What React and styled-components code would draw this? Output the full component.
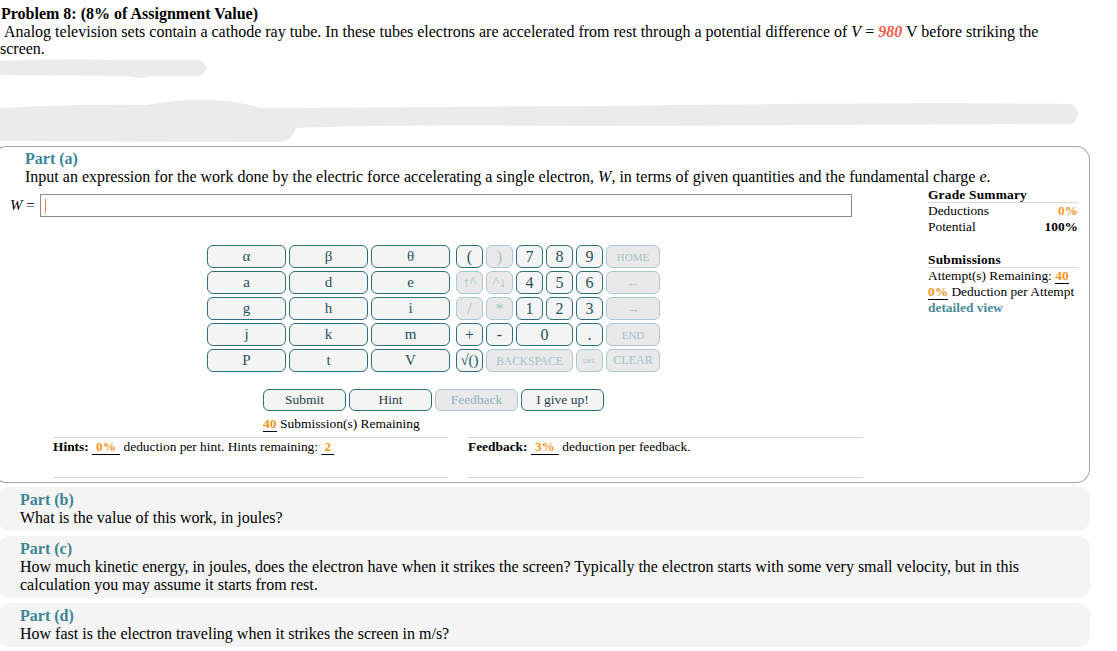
import React from 'react';
import styled, { createGlobalStyle } from 'styled-components';

const TEAL = '#2f6f7e';
const HEAD = '#3b8595';
const ORANGE = '#f7941d';

const GlobalStyle = createGlobalStyle`
  html, body { margin: 0; padding: 0; background: #fff; }
  body {
    font-family: "Liberation Serif", "Times New Roman", serif;
    color: #000;
    overflow: hidden;
    width: 1117px;
    height: 651px;
  }
`;

const Page = styled.div`
  padding-top: 5px;
`;

const Title = styled.div`
  font-size: 16px;
  font-weight: bold;
  line-height: 17px;
  padding-left: 1px;
`;

const Statement = styled.div`
  font-size: 16px;
  line-height: 17px;
  white-space: nowrap;
  padding-top: 1px;
`;

const Indent = styled.span`
  padding-left: 4px;
`;

const Var = styled.i`
  font-style: italic;
`;

const Given = styled.span`
  color: #f25a48;
  font-style: italic;
  font-weight: bold;
`;

const Redaction = styled.svg`
  display: block;
  width: 1117px;
  height: 89px;
`;

const ActivePart = styled.section`
  box-sizing: border-box;
  margin-left: -8px;
  width: 1098px;
  border: 1px solid #a8a8a8;
  border-left: 3px solid ${TEAL};
  border-radius: 14px;
  padding: 3px 0 4px 0;
`;

const PartHeading = styled.div`
  font-size: 16px;
  font-weight: bold;
  line-height: 18px;
  color: ${HEAD};
  padding-left: ${p => p.$indent || 0}px;
`;

const Question = styled.div`
  font-size: 16px;
  line-height: 18px;
  white-space: nowrap;
  padding-left: ${p => p.$indent || 0}px;
`;

const WorkRow = styled.div`
  display: flex;
  padding-left: 15px;
`;

const MainCol = styled.div`
  width: 842px;
  display: flex;
  flex-direction: column;
`;

const InputRow = styled.div`
  display: flex;
  align-items: center;
  margin-top: 8px;
  height: 23px;
`;

const InputLabel = styled.div`
  width: 30px;
  font-size: 15px;
  white-space: nowrap;
`;

const AnswerBox = styled.div`
  box-sizing: border-box;
  width: 812px;
  height: 23px;
  border: 1px solid #8a8a8a;
  display: flex;
  align-items: center;
  padding-left: 4px;
`;

const Caret = styled.span`
  display: block;
  width: 1px;
  height: 14px;
  background: #f07a5c;
`;

const CenterBlock = styled.div`
  display: flex;
  flex-direction: column;
  align-items: center;
  padding-left: 5px;
`;

const Keypad = styled.div`
  display: flex;
  gap: 6px;
  margin-top: 28px;
`;

const VarGrid = styled.div`
  display: grid;
  grid-template-columns: repeat(3, 79px);
  grid-auto-rows: 23px;
  gap: 3px;
`;

const OpGrid = styled.div`
  display: grid;
  grid-template-columns: repeat(5, 27px) 54px;
  grid-auto-rows: 23px;
  gap: 3px;
`;

const Key = styled.button`
  box-sizing: border-box;
  margin: 0;
  padding: 0;
  height: 23px;
  border: 1px solid ${p => (p.$off ? '#a9c8d0' : TEAL)};
  border-radius: 6px;
  background: ${p => (p.$off ? '#e9e9e9' : '#f4f4f4')};
  color: ${p => (p.$off ? '#a6c2ca' : '#27535f')};
  font-family: "Liberation Serif", "Times New Roman", serif;
  font-size: ${p => p.$size || 16}px;
  grid-column: span ${p => p.$span || 1};
  display: flex;
  align-items: center;
  justify-content: center;
  white-space: nowrap;
  overflow: hidden;
`;

const ActionBlock = styled.div`
  display: flex;
  flex-direction: column;
  margin-top: 17px;
`;

const Actions = styled.div`
  display: flex;
  gap: 3px;
`;

const ActionButton = styled.button`
  box-sizing: border-box;
  margin: 0;
  padding: 0;
  width: 83px;
  height: 22px;
  border: 1px solid ${p => (p.$off ? '#a9c8d0' : TEAL)};
  border-radius: 6px;
  background: ${p => (p.$off ? '#e9e9e9' : '#f4f4f4')};
  color: ${p => (p.$off ? '#8fb3bd' : '#1e3f48')};
  font-family: "Liberation Serif", "Times New Roman", serif;
  font-size: 13.5px;
`;

const Remaining = styled.div`
  margin-top: 5px;
  font-size: 13.5px;
  line-height: 15px;
  white-space: nowrap;
`;

const Num = styled.span`
  color: ${ORANGE};
  font-weight: bold;
  border-bottom: 1px solid #000;
  padding: 0 ${p => p.$pad || 0}px;
`;

const Summary = styled.aside`
  margin-left: 76px;
  margin-top: 1px;
  width: 150px;
  font-size: 13.4px;
`;

const SummaryTitle = styled.div`
  font-weight: bold;
  line-height: 15px;
  border-bottom: 1px solid #dcdcdc;
  margin-top: ${p => p.$top || 0}px;
  letter-spacing: 0.2px;
`;

const SummaryRow = styled.div`
  display: flex;
  justify-content: space-between;
  line-height: 16px;
  white-space: nowrap;
`;

const Pct = styled.span`
  font-weight: bold;
  color: ${p => p.$color || '#000'};
`;

const DetailLink = styled.div`
  font-weight: bold;
  color: #4a8a99;
  line-height: 16px;
`;

const Footer = styled.div`
  display: flex;
  gap: 20px;
  margin-top: 6px;
  padding-left: 58px;
`;

const FooterCol = styled.div`
  width: 395px;
  height: 38px;
  border-top: 1px solid #d4d4d4;
  border-bottom: 1px solid #d4d4d4;
  font-size: 13.4px;
  line-height: 16px;
  padding-top: 1px;
  box-sizing: content-box;
  white-space: nowrap;
`;

const PartCard = styled.section`
  box-sizing: border-box;
  margin-left: -2px;
  margin-top: ${p => p.$top || 5}px;
  width: 1092px;
  background: #f4f4f4;
  border-radius: 12px;
  padding: 4px 0 4px 22px;
`;

const varRows = [
  ['α', 'β', 'θ'],
  ['a', 'd', 'e'],
  ['g', 'h', 'i'],
  ['j', 'k', 'm'],
  ['P', 't', 'V'],
];

const opKeys = [
  { t: '(' }, { t: ')', off: true }, { t: '7' }, { t: '8' }, { t: '9' }, { t: 'HOME', off: true, size: 11 },
  { t: '↑^', off: true, size: 14 }, { t: '^↓', off: true, size: 14 }, { t: '4' }, { t: '5' }, { t: '6' }, { t: '←', off: true, size: 13 },
  { t: '/', off: true }, { t: '*', off: true }, { t: '1' }, { t: '2' }, { t: '3' }, { t: '→', off: true, size: 13 },
  { t: '+' }, { t: '-' }, { t: '0', span: 2 }, { t: '.' }, { t: 'END', off: true, size: 11 },
  { t: '√()', size: 15 }, { t: 'BACKSPACE', off: true, size: 11.5, span: 3 }, { t: 'DEL', off: true, size: 7 }, { t: 'CLEAR', off: true, size: 12 },
];

export default function App() {
  return (
    <Page>
      <GlobalStyle />
      <Title>Problem 8: (8% of Assignment Value)</Title>
      <Statement>
        <Indent />Analog television sets contain a cathode ray tube. In these tubes electrons are accelerated from rest through a potential difference of <Var>V</Var> = <Given>980</Given> V before striking the
        <br />
        screen.
      </Statement>
      <Redaction viewBox="0 57 1117 89" aria-hidden="true">
        <path
          d="M0 61 Q60 58 125 60 L200 60 Q212 68 200 76 L150 76 Q140 80 128 76 L0 75 Z"
          fill="#ebebeb"
        />
        <path
          d="M0 108 Q80 104 148 105 Q180 98 228 101 Q248 104 262 108 L600 106 Q900 102 1072 104 Q1084 114 1072 124 L600 126 Q400 124 296 128 Q292 141 280 142 L0 141 Z"
          fill="#ebebeb"
        />
      </Redaction>

      <ActivePart>
        <PartHeading $indent={30}>Part (a)</PartHeading>
        <Question $indent={30}>
          Input an expression for the work done by the electric force accelerating a single electron, <Var>W</Var>, in terms of given quantities and the fundamental charge <Var>e</Var>.
        </Question>
        <WorkRow>
          <MainCol>
            <InputRow>
              <InputLabel><Var>W</Var> =</InputLabel>
              <AnswerBox><Caret /></AnswerBox>
            </InputRow>
            <CenterBlock>
              <Keypad>
                <VarGrid>
                  {varRows.flat().map((k, i) => (
                    <Key key={i} $size={15}>{k}</Key>
                  ))}
                </VarGrid>
                <OpGrid>
                  {opKeys.map((k, i) => (
                    <Key key={i} $off={k.off} $size={k.size} $span={k.span}>{k.t}</Key>
                  ))}
                </OpGrid>
              </Keypad>
              <ActionBlock>
                <Actions>
                  <ActionButton>Submit</ActionButton>
                  <ActionButton>Hint</ActionButton>
                  <ActionButton $off>Feedback</ActionButton>
                  <ActionButton>I give up!</ActionButton>
                </Actions>
                <Remaining><Num>40</Num> Submission(s) Remaining</Remaining>
              </ActionBlock>
            </CenterBlock>
          </MainCol>
          <Summary>
            <SummaryTitle>Grade Summary</SummaryTitle>
            <SummaryRow><span>Deductions</span><Pct $color={ORANGE}>0%</Pct></SummaryRow>
            <SummaryRow><span>Potential</span><Pct>100%</Pct></SummaryRow>
            <SummaryTitle $top={17}>Submissions</SummaryTitle>
            <SummaryRow><span>Attempt(s) Remaining: <Num>40</Num></span></SummaryRow>
            <SummaryRow><span><Num>0%</Num> Deduction per Attempt</span></SummaryRow>
            <DetailLink>detailed view</DetailLink>
          </Summary>
        </WorkRow>
        <Footer>
          <FooterCol>
            <b>Hints:</b> <Num $pad={4}>0%</Num> deduction per hint. Hints remaining: <Num $pad={3}>2</Num>
          </FooterCol>
          <FooterCol>
            <b>Feedback:</b> <Num $pad={4}>3%</Num> deduction per feedback.
          </FooterCol>
        </Footer>
      </ActivePart>

      <PartCard $top={4}>
        <PartHeading>Part (b)</PartHeading>
        <Question>What is the value of this work, in joules?</Question>
      </PartCard>
      <PartCard>
        <PartHeading>Part (c)</PartHeading>
        <Question>
          How much kinetic energy, in joules, does the electron have when it strikes the screen? Typically the electron starts with some very small velocity, but in this
          <br />
          calculation you may assume it starts from rest.
        </Question>
      </PartCard>
      <PartCard>
        <PartHeading>Part (d)</PartHeading>
        <Question>How fast is the electron traveling when it strikes the screen in m/s?</Question>
      </PartCard>
    </Page>
  );
}
